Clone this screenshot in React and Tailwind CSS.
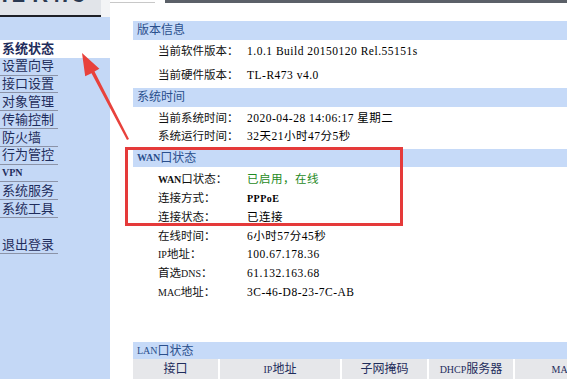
export default function App() {
  const font = { fontFamily: '"Liberation Serif", "Noto Sans CJK SC", serif' };

  const menu = ['设置向导', '接口设置', '对象管理', '传输控制', '防火墙', '行为管控', 'VPN', '系统服务', '系统工具'];

  const Row = ({ label, value, h = 'h-[18.8px]', valueClass = 'text-black' }) => (
    <div className={`flex items-center ${h} pl-[25px] text-[11.5px]`}>
      <div className="w-[89px] shrink-0 text-[#111]">{label}</div>
      <div className={`tracking-[0.5px] ${valueClass}`}>{value}</div>
    </div>
  );

  const Header = ({ title, h = 'h-[19px]' }) => (
    <div className={`flex items-center ${h} bg-[#c6daf8] pl-[4px] text-[12px] text-[#2a4f8c]`}>{title}</div>
  );

  return (
    <div className="relative flex w-[567px] h-[379px] overflow-hidden bg-white" style={font}>
      {/* 左侧菜单 */}
      <div className="w-[110px] shrink-0 bg-[#c4d8f6] flex flex-col">
        <div className="h-[17px] bg-[#f3f4f6] flex">
          <div className="w-[101px] h-[17px] bg-[#e1e4e9] border-b-2 border-[#1d1f26] overflow-hidden">
            <div className="-mt-[17px] -ml-[2px] text-[22px] font-bold text-[#2b3a52] leading-[24px]" style={{ fontFamily: '"Liberation Sans", sans-serif' }}>
              TL-R473
            </div>
          </div>
        </div>
        <div className="h-[23px]"></div>
        <div className="h-[17.8px] bg-white flex items-center pl-[2px] text-[13px] font-bold text-[#1f2d5c]">系统状态</div>
        {menu.map((m) => (
          <div key={m} className="h-[17.8px] flex items-center">
            <div className="w-[58px] h-full flex items-center pl-[2px] border-b border-[#8b93a8] text-[13px] text-[#1f2d5c]">
              {m === 'VPN' ? <span className="text-[10px] font-bold">VPN</span> : m}
            </div>
          </div>
        ))}
        <div className="h-[18px]"></div>
        <div className="h-[17.8px] flex items-center">
          <div className="w-[58px] h-full flex items-center pl-[2px] border-b border-[#8b93a8] text-[13px] text-[#1f2d5c]">退出登录</div>
        </div>
      </div>

      {/* 右侧内容 */}
      <div className="flex-1 flex flex-col min-w-0">
        <div className="flex h-[4px]">
          <div className="w-[45px] mt-[2px] h-px bg-[#c8c8c8]"></div>
          <div className="w-[10px]"></div>
          <div className="flex-1 h-[3px] bg-[#5b6068]"></div>
        </div>
        <div className="h-[18px]"></div>
        <div className="pl-[23px] flex flex-col">
          <Header title="版本信息" />
          <Row h="h-[24px]" label="当前软件版本：" value="1.0.1 Build 20150120 Rel.55151s" />
          <Row h="h-[24px]" label="当前硬件版本：" value="TL-R473 v4.0" />
          <Header title="系统时间" />
          <div className="h-[3px]"></div>
          <Row h="h-[18px]" label="当前系统时间：" value="2020-04-28 14:06:17 星期二" />
          <Row h="h-[18px]" label="系统运行时间：" value="32天21小时47分5秒" />
          <div className="h-[3px]"></div>
          <Header h="h-[18px]" title={<><span className="text-[10px] font-bold">WAN</span>口状态</>} />
          <div className="h-[3.6px]"></div>
          <Row label={<><span className="text-[10px] font-bold">WAN</span>口状态：</>} value="已启用，在线" valueClass="text-[#1f8a24]" />
          <Row label="连接方式：" value={<span className="text-[10px] font-bold">PPPoE</span>} />
          <Row label="连接状态：" value="已连接" />
          <Row label="在线时间：" value="6小时57分45秒" />
          <Row label={<><span className="text-[10px]">IP</span>地址：</>} value="100.67.178.36" />
          <Row label={<>首选<span className="text-[10px]">DNS</span>：</>} value="61.132.163.68" />
          <Row label={<><span className="text-[10px]">MAC</span>地址：</>} value="3C-46-D8-23-7C-AB" />
          <div className="h-[40px]"></div>
          <Header h="h-[17px]" title={<><span className="text-[10px]">LAN</span>口状态</>} />
          <div className="flex h-[20px] text-[12px] text-[#1f2d5c]">
            <div className="w-[85px] shrink-0 bg-[#e6e7ea] flex items-center justify-center mr-[2px]">接口</div>
            <div className="w-[120px] shrink-0 bg-[#e6e7ea] flex items-center justify-center mr-[2px]"><span className="text-[10px]">IP</span>地址</div>
            <div className="w-[85px] shrink-0 bg-[#e6e7ea] flex items-center justify-center mr-[2px]">子网掩码</div>
            <div className="w-[84px] shrink-0 bg-[#e6e7ea] flex items-center justify-center mr-[2px]"><span className="text-[10px]">DHCP</span>服务器</div>
            <div className="w-[120px] shrink-0 bg-[#e6e7ea] flex items-center justify-center"><span className="text-[10px]">MAC</span>地址</div>
          </div>
        </div>
      </div>

      {/* 标注 */}
      <div className="absolute left-[125px] top-[147px] w-[278px] h-[79px] border-[3px] border-[#e53a3a]"></div>
      <svg className="absolute left-0 top-0" width="567" height="379" viewBox="0 0 567 379">
        <polygon points="82,53 99.4,68.8 94.5,71.6 129,139 127,140 91.5,73.2 85.2,76.2" fill="#e8423c" />
      </svg>
    </div>
  );
}
